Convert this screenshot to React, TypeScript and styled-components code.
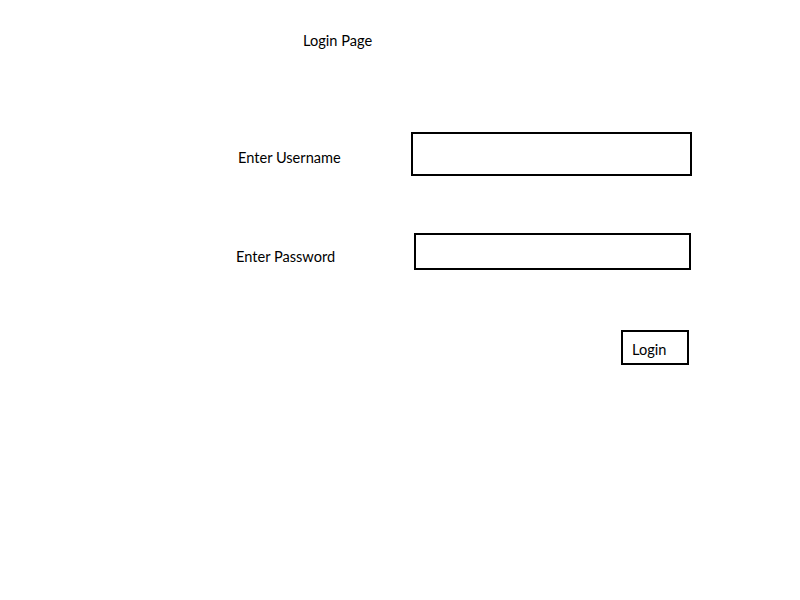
import styled, { createGlobalStyle } from 'styled-components';

const GlobalStyle = createGlobalStyle`
  body {
    margin: 0;
    background: #ffffff;
    font-family: Lato, "Open Sans", sans-serif;
    color: #000000;
  }
`;

const Page = styled.div`
  display: flex;
  flex-direction: column;
  width: 800px;
  height: 600px;
`;

const Title = styled.div`
  margin: 32px 0 0 303px;
  font-size: 14.6px;
  line-height: 18px;
`;

const Row = styled.div<{ $gap: number; $indent: number }>`
  display: flex;
  align-items: center;
  margin-top: ${(p) => p.$gap}px;
  padding-left: ${(p) => p.$indent}px;
`;

const Label = styled.label<{ $width: number; $drop: number }>`
  width: ${(p) => p.$width}px;
  font-size: 14.6px;
  line-height: 18px;
  padding-top: ${(p) => p.$drop}px;
`;

const Field = styled.input<{ $w: number; $h: number }>`
  box-sizing: border-box;
  width: ${(p) => p.$w}px;
  height: ${(p) => p.$h}px;
  border: 2px solid #000;
  border-radius: 0;
  padding: 0 6px;
  margin: 0;
  background: #fff;
  font: inherit;
  outline: none;
`;

const LoginButton = styled.button`
  box-sizing: border-box;
  width: 68px;
  height: 35px;
  margin: 0;
  border: 2px solid #000;
  border-radius: 0;
  background: #fff;
  padding: 5px 0 0 9px;
  text-align: left;
  font-family: Lato, "Open Sans", sans-serif;
  font-size: 14.6px;
  line-height: 18px;
  color: #000;
`;

export default function App() {
  return (
    <>
      <GlobalStyle />
      <Page>
        <Title>Login Page</Title>
        <Row $gap={82} $indent={238}>
          <Label $width={173} $drop={7}>Enter Username</Label>
          <Field $w={281} $h={44} type="text" />
        </Row>
        <Row $gap={57} $indent={236}>
          <Label $width={178} $drop={11}>Enter Password</Label>
          <Field $w={277} $h={37} type="password" />
        </Row>
        <Row $gap={60} $indent={621}>
          <LoginButton type="button">Login</LoginButton>
        </Row>
      </Page>
    </>
  );
}
